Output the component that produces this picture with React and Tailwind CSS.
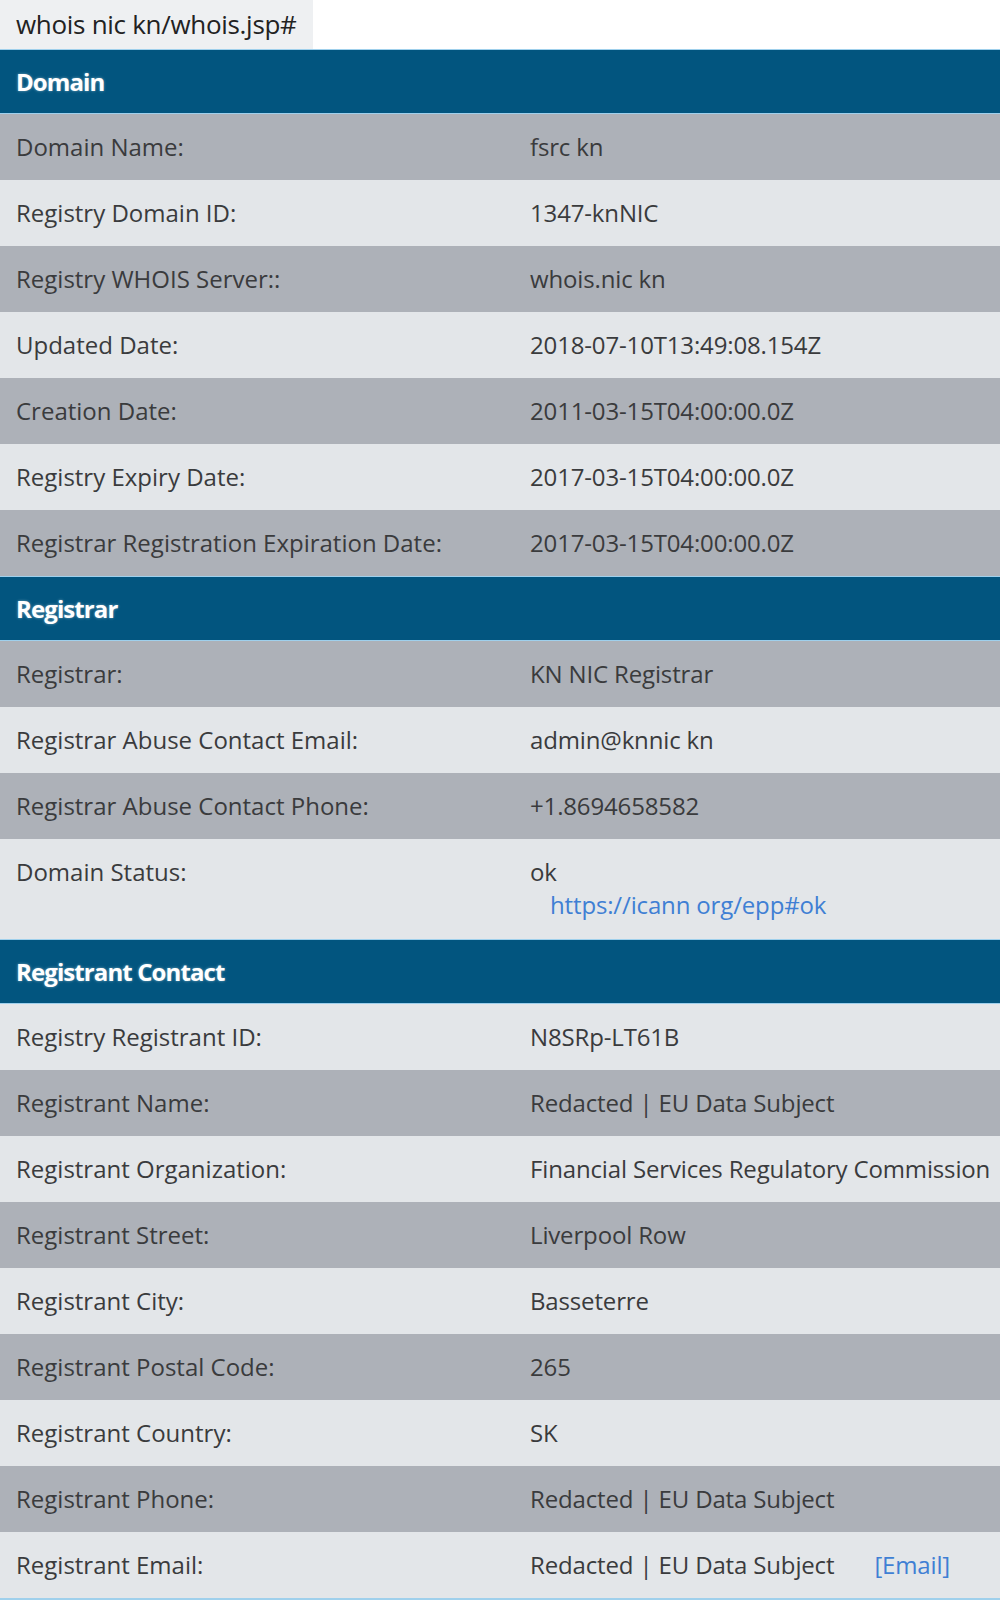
import React from "react";

const FONT = { fontFamily: '"Open Sans", "Noto Sans", sans-serif' };

function Header({ title }) {
  return (
    <div className="h-[65px] bg-[#02557f] border-t border-b border-[#9fd0ec] flex items-center px-4">
      <span className="text-white font-bold text-[24px] tracking-[-0.9px] [text-shadow:0_0_3px_rgba(255,255,255,0.45)]">
        {title}
      </span>
    </div>
  );
}

function Row({ label, dark, children, tall }) {
  return (
    <div
      className={`grid grid-cols-[514px_1fr] overflow-hidden whitespace-nowrap ${
        dark ? "bg-[#adb1b8]" : "bg-[#e3e6e9]"
      } ${tall ? "h-[100px]" : "h-[66px]"}`}
    >
      <div className={`px-4 flex ${tall ? "items-start pt-[17px] leading-[32px]" : "items-center"} text-[#3a3b3d]`}>
        {label}
      </div>
      <div className={`px-4 flex ${tall ? "flex-col pt-[17px]" : "items-center"} text-[#3a3b3d] tracking-[-0.15px]`}>
        {children}
      </div>
    </div>
  );
}

const domain = [
  ["Domain Name:", "fsrc kn"],
  ["Registry Domain ID:", "1347-knNIC"],
  ["Registry WHOIS Server::", "whois.nic kn"],
  ["Updated Date:", "2018-07-10T13:49:08.154Z"],
  ["Creation Date:", "2011-03-15T04:00:00.0Z"],
  ["Registry Expiry Date:", "2017-03-15T04:00:00.0Z"],
  ["Registrar Registration Expiration Date:", "2017-03-15T04:00:00.0Z"],
];

const registrar = [
  ["Registrar:", "KN NIC Registrar"],
  ["Registrar Abuse Contact Email:", "admin@knnic kn"],
  ["Registrar Abuse Contact Phone:", "+1.8694658582"],
];

const registrant = [
  ["Registry Registrant ID:", "N8SRp-LT61B"],
  ["Registrant Name:", "Redacted | EU Data Subject"],
  ["Registrant Organization:", "Financial Services Regulatory Commission"],
  ["Registrant Street:", "Liverpool Row"],
  ["Registrant City:", "Basseterre"],
  ["Registrant Postal Code:", "265"],
  ["Registrant Country:", "SK"],
  ["Registrant Phone:", "Redacted | EU Data Subject"],
];

export default function App() {
  return (
    <div className="w-[1000px] h-[1600px] bg-[#9fd0ec] overflow-hidden text-[24px]" style={FONT}>
      <div className="h-[49px] bg-white flex">
        <div className="w-[313px] bg-[#eef0f2] flex items-center px-4 text-[#222] text-[26px] tracking-[-0.3px] whitespace-nowrap">
          whois nic kn/whois.jsp#
        </div>
      </div>

      <Header title="Domain" />
      {domain.map(([l, v], i) => (
        <Row key={l} label={l} dark={i % 2 === 0}>
          {v}
        </Row>
      ))}

      <Header title="Registrar" />
      {registrar.map(([l, v], i) => (
        <Row key={l} label={l} dark={i % 2 === 0}>
          {v}
        </Row>
      ))}
      <Row label="Domain Status:" tall>
        <span className="leading-[32px]">ok</span>
        <span className="leading-[33px] pl-5 text-[#3f7fd4]">https://icann org/epp#ok</span>
      </Row>

      <Header title="Registrant Contact" />
      {registrant.map(([l, v], i) => (
        <Row key={l} label={l} dark={i % 2 === 1}>
          {v}
        </Row>
      ))}
      <Row label="Registrant Email:">
        <span>Redacted | EU Data Subject</span>
        <span className="ml-[40px] text-[#3f7fd4]">[Email]</span>
      </Row>
    </div>
  );
}
